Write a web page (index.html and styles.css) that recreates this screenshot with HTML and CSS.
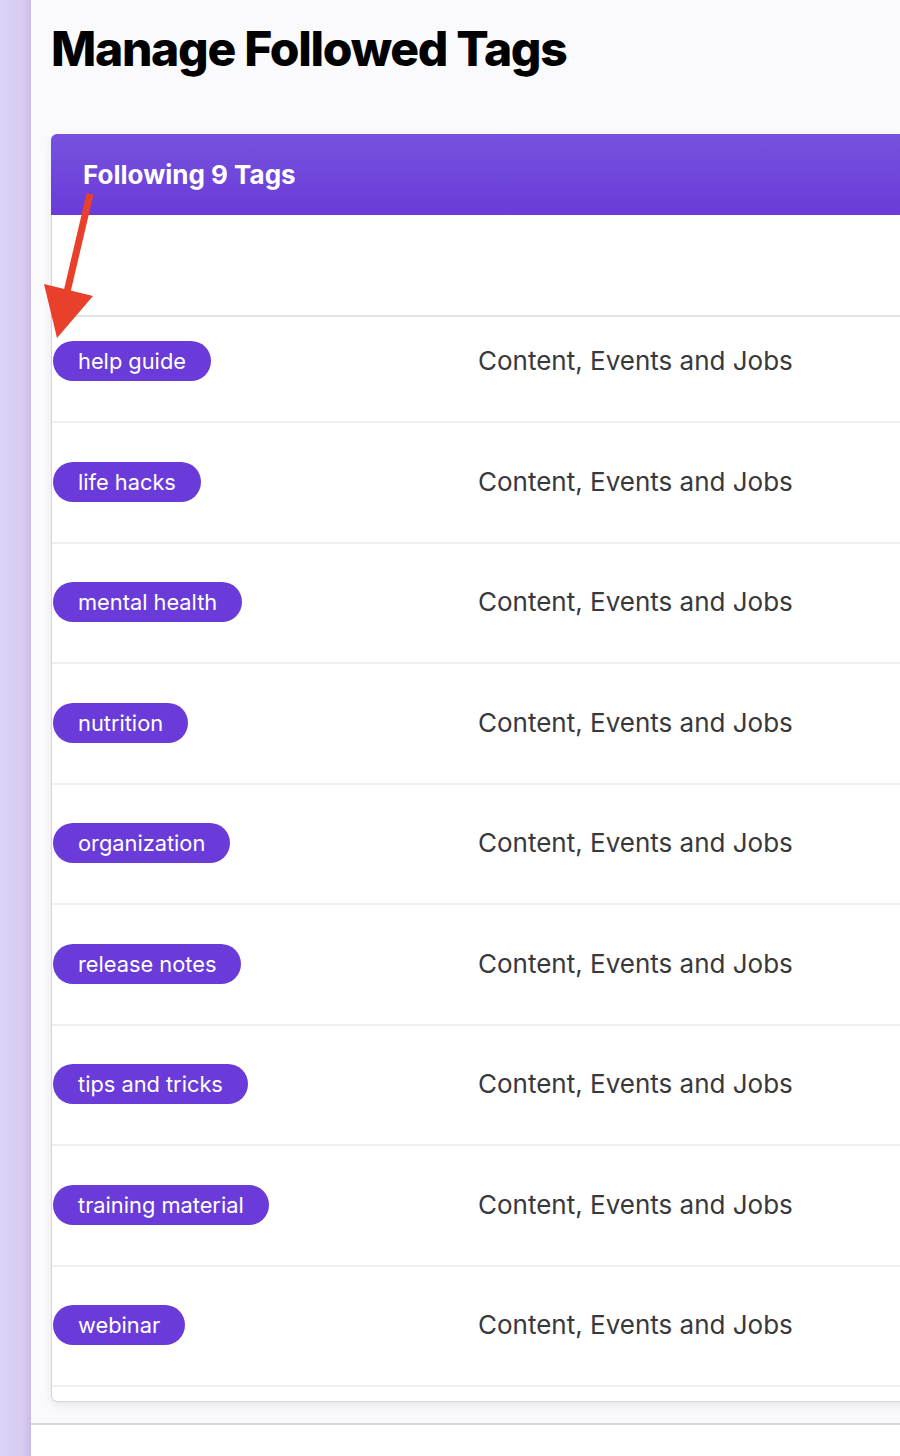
FILE: index.html
```html
<!DOCTYPE html>
<html lang="en">
<head>
  <meta charset="UTF-8">
  <meta name="viewport" content="width=device-width, initial-scale=1.0">
  <title>Manage Followed Tags</title>
  <link rel="stylesheet" href="styles.css">
</head>
<body>
  <div class="layout">
    <div class="sidebar"></div>
    <div class="page">
      <div class="main">
        <h1>Manage Followed Tags</h1>
        <div class="card">
          <div class="card-header">Following 9 Tags</div>
          <div class="card-body">
            <div class="tag-head"></div>
            <div class="tag-row tag-row-first">
              <div class="tag-cell"><span class="tag">help guide</span></div>
              <div class="scope">Content, Events and Jobs</div>
            </div>
            <div class="tag-row">
              <div class="tag-cell"><span class="tag">life hacks</span></div>
              <div class="scope">Content, Events and Jobs</div>
            </div>
            <div class="tag-row">
              <div class="tag-cell"><span class="tag">mental health</span></div>
              <div class="scope">Content, Events and Jobs</div>
            </div>
            <div class="tag-row">
              <div class="tag-cell"><span class="tag">nutrition</span></div>
              <div class="scope">Content, Events and Jobs</div>
            </div>
            <div class="tag-row">
              <div class="tag-cell"><span class="tag">organization</span></div>
              <div class="scope">Content, Events and Jobs</div>
            </div>
            <div class="tag-row">
              <div class="tag-cell"><span class="tag">release notes</span></div>
              <div class="scope">Content, Events and Jobs</div>
            </div>
            <div class="tag-row">
              <div class="tag-cell"><span class="tag">tips and tricks</span></div>
              <div class="scope">Content, Events and Jobs</div>
            </div>
            <div class="tag-row">
              <div class="tag-cell"><span class="tag">training material</span></div>
              <div class="scope">Content, Events and Jobs</div>
            </div>
            <div class="tag-row">
              <div class="tag-cell"><span class="tag">webinar</span></div>
              <div class="scope">Content, Events and Jobs</div>
            </div>
          </div>
        </div>
      </div>
      <div class="footer"></div>
    </div>
  </div>

  <!-- annotation arrow pointing at the first tag -->
  <svg class="arrow" width="110" height="350" viewBox="0 0 110 350">
    <line x1="90" y1="194" x2="67" y2="292" stroke="#e8402a" stroke-width="7"/>
    <polygon points="44,284 93,296 57,338" fill="#e8402a"/>
  </svg>
</body>
</html>
```

FILE: styles.css
```css
html, body {
  margin: 0;
  overflow: hidden;
}
body {
  font-family: 'Inter', 'Noto Sans', sans-serif;
  background-color: #fff;
}
.layout {
  display: flex;
  min-height: 1456px;
}
.sidebar {
  width: 31px;
  flex-shrink: 0;
  background: linear-gradient(90deg, #dcd2f6 0, #d7cdf3 70%, #c9bde8 100%);
}
.page {
  flex: 1;
  min-width: 0;
  display: flex;
  flex-direction: column;
}
.main {
  background-color: #fafafd;
  padding: 19px 0 21px 20px;
  border-bottom: 2px solid #d6d6d8;
  overflow: hidden;
}
h1 {
  margin: 0 0 55px 0;
  font-size: 48px;
  line-height: 60px;
  font-weight: 800;
  letter-spacing: -1.3px;
  color: #000;
}
.card {
  width: 1100px;
  border-radius: 6px;
  background-color: #fff;
  box-shadow: 0 4px 10px rgba(0, 0, 0, 0.07);
}
.card-header {
  height: 81px;
  padding-left: 32px;
  display: flex;
  align-items: center;
  color: #fff;
  font-size: 26px;
  font-weight: 700;
  border-radius: 6px 6px 0 0;
  background: linear-gradient(180deg, #7652dd 0, #6a3bd9 100%);
}
.card-body {
  border: 1px solid #d4d4d6;
  border-top: none;
  border-radius: 0 0 6px 6px;
  padding-bottom: 14px;
}
.tag-head {
  height: 100px;
  border-bottom: 2px solid #e4e4e6;
}
.tag-row {
  display: grid;
  grid-template-columns: 426px 1fr;
  align-items: center;
  padding: 38.5px 0 40px 0;
  border-bottom: 2px solid #f0f0f2;
}
.tag-row-first {
  padding-top: 24px;
}
.tag-cell {
  padding-left: 1px;
}
.tag {
  display: inline-block;
  height: 40px;
  line-height: 40px;
  padding: 0 25px;
  border-radius: 20px;
  background-color: #6a3bd9;
  color: #fff;
  font-size: 21.8px;
}
.scope {
  font-size: 26px;
  color: #38383d;
  margin-top: -1px;
}
.footer {
  flex: 1;
  background-color: #fff;
}
.arrow {
  position: absolute;
  top: 0;
  left: 0;
}
```
